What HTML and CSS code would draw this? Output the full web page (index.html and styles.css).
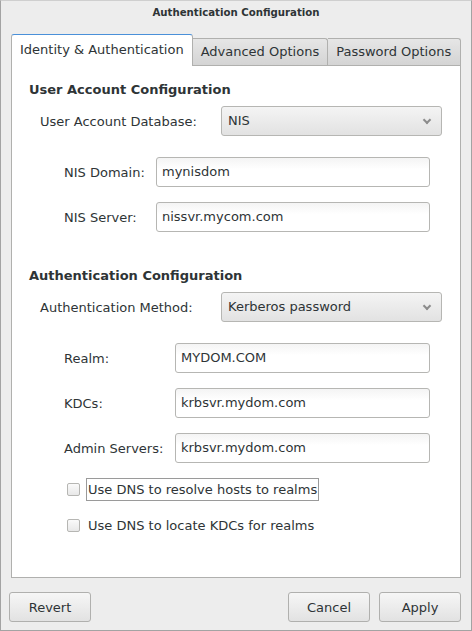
FILE: index.html
```html
<!DOCTYPE html>
<html lang="en">
<head>
    <meta charset="UTF-8">
    <title>Authentication Configuration</title>
    <link rel="stylesheet" href="styles.css">
</head>
<body>
    <div class="window">
        <div class="titlebar">Authentication Configuration</div>

        <div class="notebook">
            <ul class="tabs">
                <li class="tab active">Identity &amp; Authentication</li>
                <li class="tab">Advanced Options</li>
                <li class="tab">Password Options</li>
            </ul>

            <div class="panel">
                <h2>User Account Configuration</h2>
                <div class="combo-row">
                    <span class="label">User Account Database:</span>
                    <div class="combo">NIS <span class="chev"></span></div>
                </div>
                <div class="fields nis">
                    <label>NIS Domain:</label>
                    <div class="entry">mynisdom</div>
                    <label>NIS Server:</label>
                    <div class="entry">nissvr.mycom.com</div>
                </div>

                <h2 class="second">Authentication Configuration</h2>
                <div class="combo-row">
                    <span class="label">Authentication Method:</span>
                    <div class="combo">Kerberos password <span class="chev"></span></div>
                </div>
                <div class="fields krb">
                    <label>Realm:</label>
                    <div class="entry">MYDOM.COM</div>
                    <label>KDCs:</label>
                    <div class="entry">krbsvr.mydom.com</div>
                    <label>Admin Servers:</label>
                    <div class="entry">krbsvr.mydom.com</div>
                </div>

                <div class="checks">
                    <div class="check"><span class="box"></span><span class="text focus">Use DNS to resolve hosts to realms</span></div>
                    <div class="check"><span class="box"></span><span class="text">Use DNS to locate KDCs for realms</span></div>
                </div>
            </div>
        </div>

        <div class="actions">
            <button class="btn">Revert</button>
            <div class="right">
                <button class="btn">Cancel</button>
                <button class="btn">Apply</button>
            </div>
        </div>
    </div>
</body>
</html>
```

FILE: styles.css
```css
* {
    box-sizing: border-box;
}

body {
    margin: 0;
    background-color: #ededed;
    font-family: "DejaVu Sans", sans-serif;
    font-size: 13px;
    color: #2e3436;
}

.window {
    height: 631px;
    border: 1px solid #a3a3a3;
    border-top-color: #cfcfcf;
    display: flex;
    flex-direction: column;
    padding: 0 10px;
}

.titlebar {
    height: 25px;
    line-height: 24px;
    text-align: center;
    font-weight: bold;
    font-size: 10.2px;
}

.tabs {
    display: flex;
    align-items: flex-end;
    list-style: none;
    margin: 7px 0 0;
    padding: 0;
    height: 32px;
}

.tab {
    height: 27px;
    line-height: 25px;
    padding: 0 8px 0 8px;
    border: 1px solid #b0b0ae;
    border-bottom: none;
    border-left: none;
    border-radius: 0 3px 0 0;
    background: linear-gradient(#e6e6e6, #d4d4d4);
}

.tab:last-child {
    flex: 1;
}

.tab.active {
    height: 32px;
    line-height: 30px;
    padding: 0 8px;
    border-left: 1px solid #b0b0ae;
    border-top: 1px solid #4a90d9;
    border-radius: 3px 3px 0 0;
    background: #fff;
    margin-bottom: -1px;
    position: relative;
}

.panel {
    height: 513px;
    background: #fff;
    border: 1px solid #b0b0ae;
    padding: 15px 0 0 17px;
}

h2 {
    font-size: 13px;
    font-weight: bold;
    margin: 0;
    line-height: 17px;
}

h2.second {
    margin-top: 35px;
}

.combo-row {
    display: flex;
    align-items: center;
    margin: 8px 0 0 11px;
}

.label {
    width: 181px;
}

.combo {
    width: 221px;
    height: 30px;
    line-height: 28px;
    padding: 0 6px;
    border: 1px solid #b6b6b3;
    border-radius: 3px;
    background: linear-gradient(#f4f4f4, #e2e2e2);
    position: relative;
}

.chev {
    position: absolute;
    right: 11px;
    top: 10px;
    width: 6px;
    height: 6px;
    border-right: 2px solid #8c8c8c;
    border-bottom: 2px solid #8c8c8c;
    transform: rotate(45deg);
}

.fields {
    display: grid;
    align-items: center;
    row-gap: 15px;
    margin-left: 35px;
    width: 366px;
    margin-top: 21px;
}

.fields.nis {
    grid-template-columns: 92px 1fr;
}

.fields.krb {
    grid-template-columns: 111px 1fr;
}

.entry {
    height: 30px;
    line-height: 28px;
    padding: 0 5px;
    border: 1px solid #b6b6b3;
    border-radius: 3px;
    background: linear-gradient(#f4f4f4, #ffffff 40%);
}

.checks {
    margin: 14px 0 0 38px;
}

.check {
    display: flex;
    align-items: center;
    height: 25px;
    margin-bottom: 11px;
}

.box {
    width: 13px;
    height: 13px;
    border: 1px solid #b6b6b3;
    border-radius: 2px;
    background: linear-gradient(#fafafa, #e8e8e8);
    margin-right: 6px;
}

.text {
    padding: 3px 1px 3px 1px;
    border: 1px solid transparent;
}

.text.focus {
    border-color: #9a9a9a;
}

.actions {
    display: flex;
    justify-content: space-between;
    margin-top: 14px;
    margin-left: -2px;
}

.right {
    display: flex;
    gap: 9px;
}

.btn {
    width: 82px;
    height: 30px;
    font-family: "DejaVu Sans", sans-serif;
    font-size: 13px;
    color: #2e3436;
    border: 1px solid #b0b0ae;
    border-radius: 3px;
    background: linear-gradient(#f6f6f6, #e2e2e2);
    padding: 0;
}
```
